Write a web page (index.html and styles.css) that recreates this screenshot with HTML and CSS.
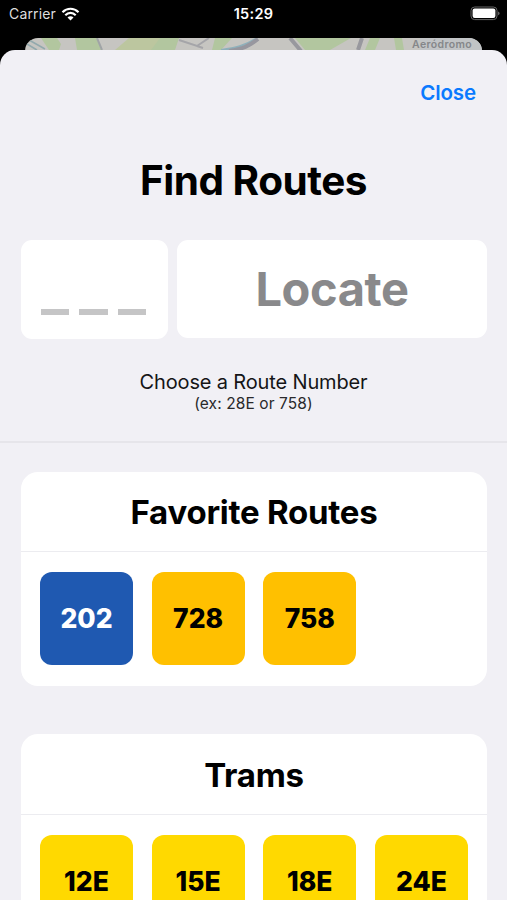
FILE: index.html
```html
<!DOCTYPE html>
<html lang="en">
<head>
    <meta charset="utf-8">
    <title>Find Routes</title>
    <link rel="stylesheet" href="styles.css">
</head>

<body>
<div class="status-bar">
    <div class="carrier">
        <span class="carrier-name">Carrier</span>
        <svg class="wifi" width="19" height="14" viewBox="0 0 18 14">
            <path d="M1 5.2C5.6 0.6 12.4 0.6 17 5.2" />
            <path d="M3.8 8.2C6.8 5.2 11.2 5.2 14.2 8.2" />
            <path class="dot" d="M9 13.4L6 10.4C7.7 8.9 10.3 8.9 12 10.4Z" />
        </svg>
    </div>
    <div class="time">15:29</div>
    <svg class="battery" width="31" height="15" viewBox="0 0 31 15">
        <rect class="case" x="1" y="1" width="26" height="12.6" rx="3.6" />
        <rect class="level" x="2.6" y="2.6" width="22.8" height="9.4" rx="2" />
        <path class="cap" d="M28.2 5.4C30 6 30 8.7 28.2 9.3Z" />
    </svg>
</div>

<div class="map">
    <svg width="457" height="24" viewBox="0 0 457 24">
        <rect width="457" height="24" fill="#c6c5c1" />
        <path d="M16 0H32L36 6L34 12H24Z" fill="#b2c69f" />
        <path d="M50 0H72L76 12H52Z" fill="#b2c69f" />
        <path d="M104 0H140V12H90Z" fill="#bcc69f" />
        <path d="M135 0H154L150 12H126Z" fill="#b2c69f" />
        <path d="M190 0H207L196 12H187Z" fill="#b2c69f" />
        <path d="M270 0H326L305 12H280Z" fill="#b2c69f" />
        <path d="M345 0H355L350 12H340Z" fill="#b2c69f" />
        <path d="M369 0H377L379 12H371Z" fill="#b2c69f" />
        <path d="M395 0H457V12H395Z" fill="#c1c4c6" />
        <path d="M72 0L77 12" stroke="#a0a4a6" fill="none" stroke-width="2" />
        <path d="M154 2L172 8L184 0M172 8L178 10" stroke="#a5a5a9" fill="none" stroke-width="2" />
        <path d="M265 0L276 13M337 0L333 12" stroke="#98989e" fill="none" stroke-width="4" />
        <path d="M196 12C210 10 220 8 232 0" stroke="#8fb0bb" fill="none" stroke-width="2" />
        <path d="M204 13C218 11 224 8 233 1" stroke="#97979f" fill="none" stroke-width="4" />
        <path d="M4 2L20 11M2 6L12 12" stroke="#92a9ad" fill="none" stroke-width="1.5" />
    </svg>
    <span class="map-label">Aeródromo</span>
</div>

<div class="sheet">
    <div class="nav">
        <a class="close">Close</a>
    </div>
    <h1>Find Routes</h1>

    <div class="search">
        <div class="route-input">
            <span></span>
            <span></span>
            <span></span>
        </div>
        <div class="locate">Locate</div>
    </div>

    <p class="hint">Choose a Route Number</p>
    <p class="example">(ex: 28E or 758)</p>

    <div class="lists">
        <div class="card">
            <h2>Favorite Routes</h2>
            <div class="routes">
                <div class="route blue">202</div>
                <div class="route orange">728</div>
                <div class="route orange">758</div>
            </div>
        </div>
        <div class="card">
            <h2>Trams</h2>
            <div class="routes">
                <div class="route yellow">12E</div>
                <div class="route yellow">15E</div>
                <div class="route yellow">18E</div>
                <div class="route yellow">24E</div>
            </div>
        </div>
    </div>
</div>
</body>
</html>
```
FILE: styles.css
```css
* {
    box-sizing: border-box;
}
body {
    margin: 0;
    height: 900px;
    overflow: hidden;
    background: #000;
    color: #000;
    font-family: Inter, "Liberation Sans", sans-serif;
}
.status-bar {
    display: grid;
    grid-template-columns: 1fr auto 1fr;
    align-items: center;
    height: 27px;
    margin-bottom: 11px;
    padding: 0 6px 0 9px;
    color: #dedede;
    font-size: 14px;
}
.carrier {
    display: flex;
    align-items: center;
    gap: 5px;
}
.carrier-name {
    letter-spacing: 0.15px;
}
.wifi {
    fill: none;
    stroke: #fff;
    stroke-width: 2.2;
}
.wifi .dot {
    fill: #fff;
    stroke: none;
}
.time {
    margin-right: 3px;
    color: #fff;
    font-size: 14.5px;
    font-weight: 600;
    letter-spacing: 0.3px;
}
.battery {
    justify-self: end;
}
.battery .case {
    fill: none;
    stroke: #666;
}
.battery .level {
    fill: #fff;
}
.battery .cap {
    fill: #777;
}
.map {
    position: relative;
    height: 24px;
    margin: 0 25px -12px;
    border-radius: 13px 13px 0 0;
    overflow: hidden;
}
.map svg {
    display: block;
}
.map-label {
    position: absolute;
    top: 0;
    right: 10px;
    color: #85878a;
    font-size: 10.5px;
    font-weight: 600;
    letter-spacing: 0.35px;
    line-height: 13px;
}
.sheet {
    position: relative;
    height: 850px;
    overflow: hidden;
    border-radius: 15px 15px 0 0;
    background: #f1f0f5;
}
.nav {
    display: flex;
    justify-content: flex-end;
    align-items: center;
    height: 86px;
    padding-right: 31px;
}
.close {
    color: #0a7aff;
    font-size: 20.5px;
    font-weight: 600;
    letter-spacing: -0.1px;
    line-height: 26px;
}
h1 {
    margin: 0;
    font-size: 40.5px;
    font-weight: 700;
    letter-spacing: -0.5px;
    line-height: 90px;
    text-align: center;
}
.search {
    display: flex;
    gap: 9px;
    margin: 14px 20px 0 21px;
}
.route-input {
    display: flex;
    justify-content: center;
    gap: 10.3px;
    width: 147px;
    height: 99px;
    padding: 69px 2px 0 0;
    border-radius: 11px;
    background: #fff;
}
.route-input span {
    width: 28.4px;
    height: 6px;
    background: #c5c5c6;
}
.locate {
    flex: 1;
    height: 98px;
    border-radius: 11px;
    background: #fff;
    color: #89898b;
    font-size: 47px;
    font-weight: 700;
    letter-spacing: -0.4px;
    line-height: 98px;
    text-align: center;
}
.hint {
    margin: 31px 0 0;
    color: #151517;
    font-size: 20px;
    letter-spacing: -0.15px;
    line-height: 24px;
    text-align: center;
}
.example {
    margin: 0;
    color: #29292b;
    font-size: 15.5px;
    letter-spacing: 0.1px;
    line-height: 19px;
    text-align: center;
}
.lists {
    display: flex;
    flex-direction: column;
    gap: 48px;
    margin-top: 28px;
    padding: 29px 20px 0 21px;
    border-top: 2px solid #e6e5ea;
}
.card {
    border-radius: 17px;
    background: #fff;
}
h2 {
    margin: 0;
    height: 80px;
    border-bottom: 1px solid #ececf0;
    font-size: 33px;
    font-weight: 700;
    letter-spacing: -0.25px;
    line-height: 80px;
    text-align: center;
}
.card + .card h2 {
    height: 81px;
    line-height: 82px;
}
.routes {
    display: grid;
    grid-template-columns: repeat(4, 93px);
    justify-content: space-between;
    padding: 20px 19px 21px;
}
.route {
    height: 93px;
    border-radius: 12px;
    font-size: 26.5px;
    font-weight: 800;
    line-height: 92px;
    text-align: center;
}
.blue {
    background: #1f59b1;
    color: #fff;
}
.orange {
    background: #ffc000;
}
.yellow {
    background: #ffd900;
}
```
